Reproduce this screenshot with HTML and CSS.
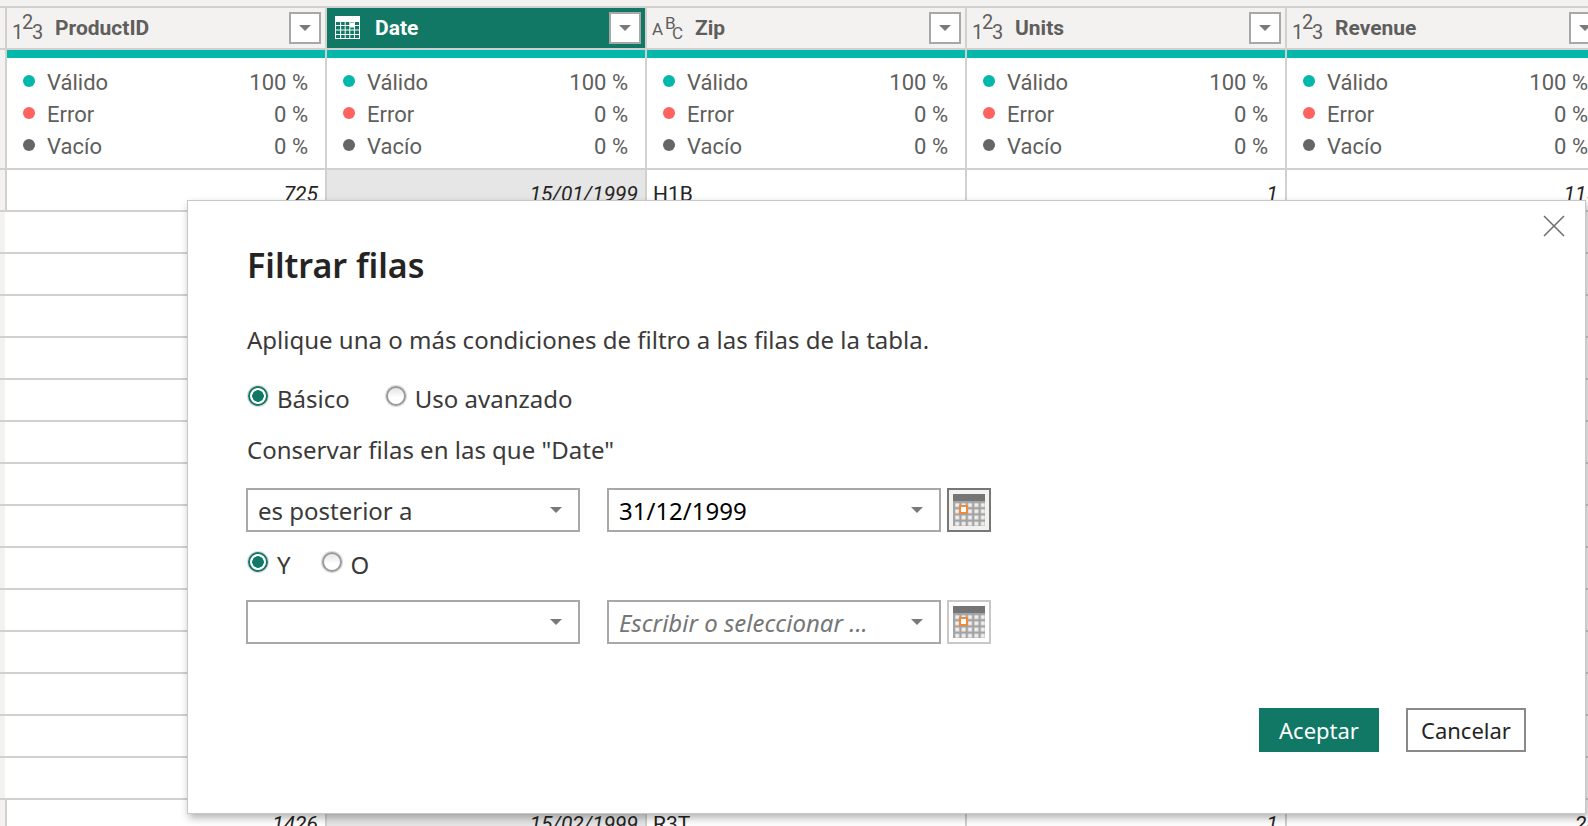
FILE: index.html
```html
<!DOCTYPE html>
<html lang="es">
<head>
<meta charset="utf-8">
<title>Filtrar filas</title>
<link rel="stylesheet" href="styles.css">
</head>
<body>
<svg class="defs" width="0" height="0" aria-hidden="true">
  <defs>
    <pattern id="calcells" width="6.4" height="6.2" patternUnits="userSpaceOnUse" x="1" y="8">
      <rect width="6.4" height="6.2" fill="#a3a3a3"/>
      <rect x="1.2" y="1.2" width="4" height="3.8" fill="#eeeeee"/>
    </pattern>
    <symbol id="cal" viewBox="0 0 32 32">
      <rect x="0" y="0" width="32" height="7" fill="#757575"/>
      <rect x="0" y="7" width="32" height="25" fill="url(#calcells)"/>
      <rect x="7" y="12" width="7" height="7" fill="#fff" stroke="#ed8b3a" stroke-width="2"/>
    </symbol>
    <symbol id="n123" viewBox="0 0 48 40">
      <text class="glyph" x="5" y="31">1</text>
      <text class="glyph" x="15" y="21">2</text>
      <text class="glyph" x="25" y="31">3</text>
    </symbol>
  </defs>
</svg>
<div class="page">
  <div class="top"></div>
  <div class="row head">
    <div class="gutter"></div>
    <div class="hcell"><svg class="hicon"><use href="#n123"/></svg><span class="hname">ProductID</span><span class="drop"><i class="caret"></i></span></div>
    <div class="hcell sel">
      <svg class="hicon" viewBox="0 0 48 40">
        <rect x="8" y="8" width="25" height="23" fill="#fff"/>
        <path d="M9 14h23v16H9z" fill="#117865"/>
        <path d="M9 17.5h23M9 22h23M9 26.500h23M13.600 14v16M18.200 14v16M22.800 14v16M27.400 14v16" stroke="#fff" stroke-width="1"/>
        <rect x="23" y="14.500" width="5" height="5" fill="#fff"/>
      </svg>
      <span class="hname">Date</span><span class="drop"><i class="caret"></i></span>
    </div>
    <div class="hcell">
      <svg class="hicon" viewBox="0 0 48 40">
        <text class="glyph abc" x="5" y="27">A</text>
        <text class="glyph abc" x="18" y="21">B</text>
        <text class="glyph abc" x="25" y="31">C</text>
      </svg>
      <span class="hname">Zip</span><span class="drop"><i class="caret"></i></span>
    </div>
    <div class="hcell"><svg class="hicon"><use href="#n123"/></svg><span class="hname">Units</span><span class="drop"><i class="caret"></i></span></div>
    <div class="hcell"><svg class="hicon"><use href="#n123"/></svg><span class="hname">Revenue</span><span class="drop"><i class="caret"></i></span></div>
  </div>
  <div class="row bar">
    <div class="gutter"></div><div class="barcell"></div><div class="barcell"></div><div class="barcell"></div><div class="barcell"></div><div class="barcell"></div>
  </div>
  <div class="row summary">
    <div class="gutter"></div>
    <div class="scell">
      <div class="sline"><i class="dot ok"></i><span class="slabel">Válido</span><span>100 %</span></div>
      <div class="sline"><i class="dot err"></i><span class="slabel">Error</span><span>0 %</span></div>
      <div class="sline"><i class="dot none"></i><span class="slabel">Vacío</span><span>0 %</span></div>
    </div>
    <div class="scell">
      <div class="sline"><i class="dot ok"></i><span class="slabel">Válido</span><span>100 %</span></div>
      <div class="sline"><i class="dot err"></i><span class="slabel">Error</span><span>0 %</span></div>
      <div class="sline"><i class="dot none"></i><span class="slabel">Vacío</span><span>0 %</span></div>
    </div>
    <div class="scell">
      <div class="sline"><i class="dot ok"></i><span class="slabel">Válido</span><span>100 %</span></div>
      <div class="sline"><i class="dot err"></i><span class="slabel">Error</span><span>0 %</span></div>
      <div class="sline"><i class="dot none"></i><span class="slabel">Vacío</span><span>0 %</span></div>
    </div>
    <div class="scell">
      <div class="sline"><i class="dot ok"></i><span class="slabel">Válido</span><span>100 %</span></div>
      <div class="sline"><i class="dot err"></i><span class="slabel">Error</span><span>0 %</span></div>
      <div class="sline"><i class="dot none"></i><span class="slabel">Vacío</span><span>0 %</span></div>
    </div>
    <div class="scell">
      <div class="sline"><i class="dot ok"></i><span class="slabel">Válido</span><span>100 %</span></div>
      <div class="sline"><i class="dot err"></i><span class="slabel">Error</span><span>0 %</span></div>
      <div class="sline"><i class="dot none"></i><span class="slabel">Vacío</span><span>0 %</span></div>
    </div>
  </div>
  <div class="row data">
    <div class="gutter"></div><div class="cell num">725</div><div class="cell num dategray">15/01/1999</div><div class="cell txt">H1B</div><div class="cell num">1</div><div class="cell num">115</div>
  </div>
  <div class="row data"><div class="gutter"></div></div>
  <div class="row data"><div class="gutter"></div></div>
  <div class="row data"><div class="gutter"></div></div>
  <div class="row data"><div class="gutter"></div></div>
  <div class="row data"><div class="gutter"></div></div>
  <div class="row data"><div class="gutter"></div></div>
  <div class="row data"><div class="gutter"></div></div>
  <div class="row data"><div class="gutter"></div></div>
  <div class="row data"><div class="gutter"></div></div>
  <div class="row data"><div class="gutter"></div></div>
  <div class="row data"><div class="gutter"></div></div>
  <div class="row data"><div class="gutter"></div></div>
  <div class="row data"><div class="gutter"></div></div>
  <div class="row data"><div class="gutter"></div></div>
  <div class="row data">
    <div class="gutter"></div><div class="cell num">1426</div><div class="cell num dategray">15/02/1999</div><div class="cell txt">R3T</div><div class="cell num">1</div><div class="cell num">28</div>
  </div>

  <div class="dialog">
    <svg class="close" viewBox="0 0 22 22"><path d="M1 1l20 20M21 1L1 21" stroke="#6b6b6b" stroke-width="1.500" fill="none"/></svg>
    <h1 class="title">Filtrar filas</h1>
    <p class="intro">Aplique una o más condiciones de filtro a las filas de la tabla.</p>
    <div class="radios first">
      <i class="radio on"></i><span class="rlabel wide">Básico</span>
      <i class="radio"></i><span class="rlabel">Uso avanzado</span>
    </div>
    <p class="keep">Conservar filas en las que "Date"</p>
    <div class="fields">
      <div class="select"><span>es posterior a</span><i class="caret"></i></div>
      <div class="select second"><span class="value">31/12/1999</span><i class="caret"></i></div>
      <div class="calbtn active"><svg class="calicon"><use href="#cal"/></svg></div>
    </div>
    <div class="radios second-line">
      <i class="radio on"></i><span class="rlabel narrow">Y</span>
      <i class="radio"></i><span class="rlabel">O</span>
    </div>
    <div class="fields">
      <div class="select"><span></span><i class="caret"></i></div>
      <div class="select second"><span class="hint">Escribir o seleccionar ...</span><i class="caret"></i></div>
      <div class="calbtn"><svg class="calicon"><use href="#cal"/></svg></div>
    </div>
    <div class="actions">
      <div class="btn primary">Aceptar</div>
      <div class="btn">Cancelar</div>
    </div>
  </div>
</div>
</body>
</html>
```
FILE: styles.css
```css
* { box-sizing: border-box; }
html, body { margin: 0; padding: 0; height: 100%; overflow: hidden; }
.defs { position: absolute; }
.page {
  position: relative;
  width: 1588px;
  height: 826px;
  overflow: hidden;
  background: #fff;
  font-family: "Roboto", sans-serif;
  color: #605e5c;
}
.top { height: 8px; background: #f3f2f1; border-bottom: 2px solid #d2d0ce; }
.row {
  display: grid;
  grid-template-columns: 5px repeat(5, 320px);
}
.gutter { background: #f3f2f1; }
.head { height: 42px; border-bottom: 2px solid #d2d0ce; background: #f3f2f1; }
.hcell {
  display: flex;
  align-items: center;
  border-left: 2px solid #d2d0ce;
  height: 40px;
  min-width: 0;
}
.hcell.sel { background: #117865; color: #fff; border-left-color: #d2d0ce; }
.hicon { width: 48px; height: 40px; flex: none; }
.glyph { font-family: "Roboto", sans-serif; font-size: 20px; fill: #605e5c; }
.abc { font-size: 17px; }
.hname { font-size: 21px; font-weight: 700; }
.drop {
  margin-left: auto;
  margin-right: 4px;
  width: 32px;
  height: 32px;
  border: 2px solid #a8a8a8;
  background: #fff;
  display: flex;
  align-items: center;
  justify-content: center;
}
.caret {
  display: block;
  width: 0;
  height: 0;
  border-left: 6px solid transparent;
  border-right: 6px solid transparent;
  border-top: 6px solid #7a7a7a;
}
.bar { height: 8px; }
.barcell { background: #01b8aa; border-left: 2px solid #d2d0ce; }
.bar .gutter { background: #f3f2f1; }
.summary { height: 112px; border-bottom: 2px solid #d2d0ce; }
.scell {
  border-left: 2px solid #d2d0ce;
  padding: 8px 17px 0 16px;
  height: 110px;
}
.sline {
  display: flex;
  align-items: center;
  height: 32px;
  font-size: 22px;
}
.dot { width: 12px; height: 12px; border-radius: 50%; margin-right: 12px; flex: none; margin-top: -2px; }
.ok { background: #01b8aa; }
.err { background: #fd625e; }
.none { background: #666; }
.slabel { margin-right: auto; }
.data { height: 42px; border-bottom: 2px solid #d2d0ce; }
.cell {
  border-left: 2px solid #d2d0ce;
  height: 40px;
  padding: 9px 7px 0;
  font-size: 21px;
  line-height: 30px;
  color: #252423;
}
.num { text-align: right; font-style: italic; }
.dategray { background: #e6e6e6; }
.txt { padding-left: 6px; }

.dialog {
  position: absolute;
  left: 187px;
  top: 200px;
  width: 1399px;
  height: 614px;
  background: #fff;
  border: 1px solid #c8c8c8;
  box-shadow: 2px 4px 8px rgba(0, 0, 0, .3);
  padding: 42px 59px 0 58px;
  font-family: "Noto Sans", sans-serif;
  color: #3b3a39;
  display: flex;
  flex-direction: column;
}
.close { position: absolute; right: 20px; top: 14px; width: 22px; height: 22px; }
.title {
  margin: 0 0 0 1px;
  height: 44px;
  line-height: 44px;
  font-size: 34px;
  font-weight: 600;
  color: #252423;
}
.intro {
  margin: 37px 0 0 1px;
  height: 32px;
  line-height: 32px;
  font-size: 24px;
}
.radios { display: flex; align-items: center; height: 32px; padding-left: 2px; }
.radios.first { margin-top: 27px; }
.radios.second-line { margin-top: 17px; }
.radio {
  flex: none;
  width: 20px;
  height: 20px;
  margin: -6px 9px 0 0;
  border-radius: 50%;
  border: 2px solid #9a9a9a;
  background: linear-gradient(#e4e4e4, #fff 60%);
  box-shadow: 0 0 1px 1px #d8d8d8;
}
.radio.on {
  border-color: #117865;
  background: radial-gradient(circle, #117865 0 5.500px, #fff 6px);
}
.rlabel { font-size: 24px; line-height: 32px; margin-right: 31px; }
.rlabel.wide { margin-right: 36px; }
.rlabel.narrow { margin-right: 31px; }
.keep {
  margin: 19px 0 0 1px;
  height: 32px;
  line-height: 32px;
  font-size: 24px;
}
.fields { display: flex; height: 44px; margin-top: 22px; }
.radios + .fields { margin-top: 19px; }
.select {
  width: 334px;
  height: 44px;
  border: 2px solid #a8a8a8;
  display: flex;
  align-items: center;
  padding: 0 16px 0 10px;
  font-size: 24px;
}
.select .caret { margin-left: auto; }
.select.second { margin-left: 27px; }
.value { color: #000; }
.hint { color: #767676; font-style: italic; }
.calbtn {
  margin-left: 6px;
  width: 44px;
  height: 44px;
  border: 2px solid #c8c8c8;
  background: #fff;
  display: flex;
  align-items: center;
  justify-content: center;
}
.calbtn.active { border-color: #777; background: #f3f2f1; }
.calicon { width: 32px; height: 32px; }
.actions { display: flex; justify-content: flex-end; gap: 27px; margin-top: 64px; }
.btn {
  width: 120px;
  height: 44px;
  border: 2px solid #8a8a8a;
  background: #fff;
  color: #252423;
  font-size: 22px;
  display: flex;
  align-items: center;
  justify-content: center;
}
.btn.primary { background: #117865; border-color: #117865; color: #fff; }
```
